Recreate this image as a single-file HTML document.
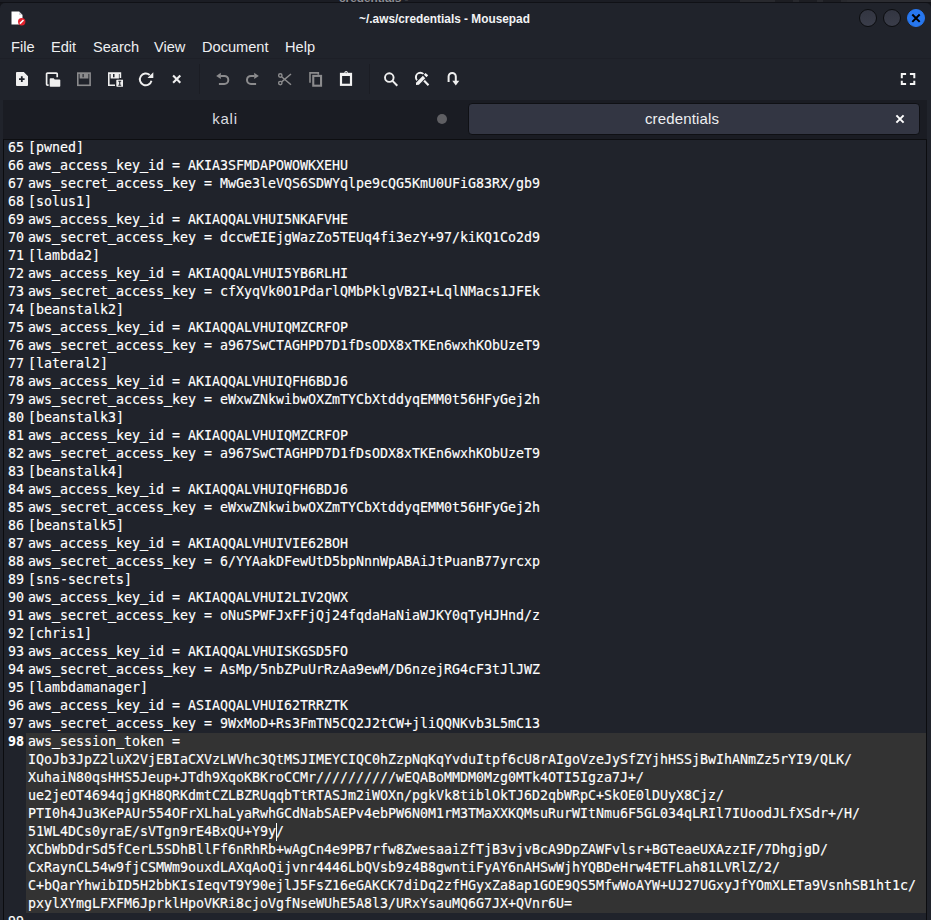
<!DOCTYPE html>
<html lang="en">
<head>
<meta charset="utf-8">
<title>~/.aws/credentials - Mousepad</title>
<style>
*{box-sizing:border-box;margin:0;padding:0}
html,body{width:931px;height:920px;overflow:hidden;background:#14151a}
body{position:relative;font-family:"Liberation Sans","DejaVu Sans",sans-serif;color:#e8e9ec}
#back{position:absolute;left:0;top:0;width:931px;height:3px;background:#1b1d24;border-bottom:1px solid #101116}
#back i{position:absolute;top:0;height:2px;background:#1d1e23}
#back{overflow:hidden}
#ghost{position:absolute;left:339px;top:-8px;font-size:11.8px;line-height:12px;font-weight:bold;color:#8e8e94;white-space:nowrap}
#win{position:absolute;left:0;top:3px;width:931px;height:917px;background:#20232b;border-radius:5px 5px 0 0;overflow:hidden}
#lborder{position:absolute;left:3px;top:136px;width:1px;height:781px;background:#0b0c0f}
/* title bar */
#title{position:absolute;left:0;top:0;width:931px;height:30px}
#title .cap{position:absolute;left:0;width:889px;top:9px;text-align:center;font-size:11.85px;font-weight:bold;color:#f2f3f5;letter-spacing:0}
.wb{position:absolute;top:6px;width:18px;height:18px;border-radius:50%;background:linear-gradient(#323541,#3a3d4a);border:1px solid #0c0d10}
.wb.close{background:#2777ef;border-color:#2777ef}
/* menubar */
#menu{position:absolute;left:0;top:30px;width:931px;height:28px}
#menu span{position:absolute;top:6px;font-size:14.6px;color:#eeeff1;white-space:nowrap}
/* toolbar */
#tools{position:absolute;left:0;top:57px;width:931px;height:40px}
#tools svg{position:absolute;top:11px;width:16px;height:16px}
.sep{position:absolute;top:4px;width:1px;height:30px;background:#1b1d24}
#hsep{position:absolute;left:0;top:55px;width:931px;height:1px;background:#1d1f27}
/* tabs */
#tabs{position:absolute;left:0;top:97px;width:931px;height:40px}
#tabs .bg{position:absolute;left:3px;top:0;width:924px;height:40px;background:#1a1c23;border-bottom:1px solid #0d0e11}
#tabs .t1{position:absolute;left:0;width:450px;top:10px;text-align:center;font-size:15px;letter-spacing:.8px;color:#dcdde0}
#tabs .dot{position:absolute;left:437px;top:14px;width:10px;height:10px;border-radius:50%;background:#5f5f63}
#tabs .act{position:absolute;left:468px;top:3px;width:452px;height:32px;background:#333643;border:1px solid #0f1014;border-radius:4px}
#tabs .t2{position:absolute;left:468px;width:428px;top:10px;text-align:center;font-size:15px;letter-spacing:.15px;color:#eeeff1}
/* editor */
#ed{position:absolute;left:5px;top:137px;width:926px;height:780px;background:#20232b;overflow:hidden}
#hl{position:absolute;left:21px;top:593px;width:900px;height:180px;background:#333333}
#rline{position:absolute;left:921px;top:0;width:1px;height:780px;background:#0b0c0f}
pre{position:absolute;top:-1px;font-family:"DejaVu Sans Mono","Liberation Mono",monospace;font-size:13.30px;line-height:18px;letter-spacing:-0.0055px;color:#ffffff;white-space:pre;-webkit-text-stroke:0.15px #ffffff}
#nums{left:3px}
#code{left:23px}
#code i{font-style:normal;position:relative;top:-1px;-webkit-text-stroke:.45px #ffffff}
#caret{position:absolute;left:270.5px;top:683px;width:1.2px;height:18px;background:#ffffff}
b{font-weight:bold}
</style>
</head>
<body>
<div id="back"><span id="ghost">credentials -</span><i style="left:740px;width:191px;background:#28292e"></i><i style="left:775px;width:18px"></i><i style="left:799px;width:18px"></i><i style="left:823px;width:18px"></i><i style="left:847px;width:84px;background:#2b2c31"></i></div>
<div id="win">
  <div id="title">
    <svg style="position:absolute;left:11px;top:8px" width="15" height="15" viewBox="0 0 15 15"><path d="M0.5 0.5h7.5l3.5 3.5v9.5h-11z" fill="#ffffff"/><path d="M8 0.5l3.5 3.5h-3.5z" fill="#d4d4d8"/><circle cx="10.7" cy="10.8" r="3.7" fill="#e0202c"/><path d="M8.9 12.6l3.6-3.6" stroke="#ffffff" stroke-width="1.5"/></svg>
    <div class="cap">~/.aws/credentials - Mousepad</div>
    <div class="wb" style="left:859px"></div>
    <div class="wb" style="left:883px"></div>
    <div class="wb close" style="left:907px"><svg width="16" height="16" viewBox="0 0 16 16" style="position:absolute;left:0;top:0"><path d="M4.300 4.500l7.400 7.400M11.700 4.500l-7.400 7.400" stroke="#000000" stroke-width="2" fill="none"/></svg></div>
  </div>
  <div id="menu">
    <span style="left:11px">File</span>
    <span style="left:51px">Edit</span>
    <span style="left:93px">Search</span>
    <span style="left:154px">View</span>
    <span style="left:202px">Document</span>
    <span style="left:285px">Help</span>
  </div>
  <div id="hsep"></div>
  <div id="tools">
    <svg style="left:14px" viewBox="0 0 16 16"><path d="M2.9 1h6.9L14 5.2V14.1a.9.9 0 0 1-.9.9H2.9a.9.9 0 0 1-.9-.9V1.9A.9.9 0 0 1 2.900 1z" fill="#efefef"/><path d="M7.8 5.3v5.6M5 8.100h5.600" stroke="#20232b" stroke-width="1.800" fill="none"/></svg>
    <svg style="left:45px" viewBox="0 0 16 16"><path d="M3.600 14.200H2.500a.9.9 0 0 1-.9-.9V3a.9.9 0 0 1 .9-.9h8.800a.9.9 0 0 1 .9.9V6.300" stroke="#efefef" stroke-width="1.700" fill="none"/><path d="M4.700 8.100a.8.8 0 0 1 .8-.8h3.200l1 1.100h4.800a.8.8 0 0 1 .8.800v5.700a.8.800 0 0 1-.8.800H5.500a.8.800 0 0 1-.8-.8z" fill="#efefef"/></svg>
    <svg style="left:76px" viewBox="0 0 16 16"><rect x="1.800" y="2.100" width="12.300" height="12.200" stroke="#8b8b8d" stroke-width="1.600" fill="none"/><path d="M3.600 2h8.800v5.600H3.600z" fill="#8b8b8d"/><path d="M6.400 3.100h1.500v3.200H6.400z" fill="#3a3c42"/></svg>
    <svg style="left:107px" viewBox="0 0 16 16"><path d="M8 14.200H1.800V2.100h11.600v5" stroke="#efefef" stroke-width="1.600" fill="none"/><path d="M3.600 2h8.300v5.400H3.600z" fill="#efefef"/><path d="M6 3h1.500v3.300H6z" fill="#20232b"/><rect x="9.300" y="8.700" width="6.900" height="7.100" rx=".7" fill="#efefef"/><path d="M11.300 10.200h2.900M11.300 14.300h2.900M12.750 10.200v4.100" stroke="#20232b" stroke-width="1.100" fill="none"/></svg>
    <svg style="left:138px" viewBox="0 0 16 16"><path d="M13.500 9.800A5.900 5.900 0 1 1 11.700 4" stroke="#efefef" stroke-width="1.900" fill="none"/><path d="M15.300 1.300v5.800H9.500z" fill="#efefef"/></svg>
    <svg style="left:169px" viewBox="0 0 16 16"><path d="M4.100 4.500l7.200 7.200M11.300 4.500l-7.200 7.200" stroke="#efefef" stroke-width="2.100" fill="none"/></svg>
    <svg style="left:214px" viewBox="0 0 16 16"><path d="M6.500 4.900h3.800a4 4 0 0 1 0 8H4.900" stroke="#8b8b8d" stroke-width="2" fill="none"/><path d="M2.200 4.900l4.600-3.100v6.200z" fill="#8b8b8d"/></svg>
    <svg style="left:245px" viewBox="0 0 16 16"><path d="M9.500 4.900H6a4 4 0 0 0 0 8h5.100" stroke="#8b8b8d" stroke-width="2" fill="none"/><path d="M13.800 4.900l-4.600-3.100v6.200z" fill="#8b8b8d"/></svg>
    <svg style="left:276px" viewBox="0 0 16 16"><circle cx="4.300" cy="4.500" r="1.700" stroke="#8b8b8d" stroke-width="1.400" fill="none"/><circle cx="4.300" cy="12.100" r="1.700" stroke="#8b8b8d" stroke-width="1.400" fill="none"/><path d="M5.600 5.800l9.400 8M5.600 10.800l9.400-7.800" stroke="#8b8b8d" stroke-width="1.500" fill="none"/></svg>
    <svg style="left:307px" viewBox="0 0 16 16"><path d="M3 11.700V1.900h8.300v1.800" stroke="#8b8b8d" stroke-width="1.600" fill="none"/><rect x="6.250" y="4.900" width="7.800" height="9.800" stroke="#8b8b8d" stroke-width="2.100" fill="none"/></svg>
    <svg style="left:338px" viewBox="0 0 16 16"><rect x="3" y="2.900" width="10" height="10.900" stroke="#f2f2f2" stroke-width="2.200" fill="none"/><path d="M4 2h8v3H4z" fill="#f2f2f2"/><circle cx="8.100" cy="1.700" r="1.700" fill="#f2f2f2"/><circle cx="8.100" cy="1.600" r=".6" fill="#20232b"/></svg>
    <svg style="left:383px" viewBox="0 0 16 16"><circle cx="6.300" cy="6.600" r="4.300" stroke="#efefef" stroke-width="1.900" fill="none"/><path d="M9.500 9.900l4.800 4.800" stroke="#efefef" stroke-width="2" fill="none"/></svg>
    <svg style="left:414px" viewBox="0 0 16 16"><circle cx="6.300" cy="6.200" r="4.400" stroke="#f2f2f2" stroke-width="2" fill="none"/><path d="M10 9.600l4.500 4.700" stroke="#f2f2f2" stroke-width="2.100" fill="none"/><path d="M8.900 3.600l3.400 3.600-7 7.700H1V11.300zM11.500.800l3.800 3.500-2.800 3.100-3.800-3.600z" fill="#20232b"/><path d="M8.900 4.700l2.300 2.500-6.300 6.600-2.900.1V11.700z" fill="#f2f2f2"/><path d="M11.500 1.900l2.700 2.450-1.700 1.950L9.900 3.700z" fill="#f2f2f2"/></svg>
    <svg style="left:445px" viewBox="0 0 16 16"><path d="M3.600 11V5.600a3.600 3.600 0 0 1 7.200 0v5" stroke="#efefef" stroke-width="2" fill="none"/><path d="M7.300 9.800h7l-3.500 4.600z" fill="#efefef"/></svg>
    <svg style="left:900px" viewBox="0 0 16 16"><path d="M1.800 7.300V3H6.100M9.900 3h4.400v4.300M14.300 9.700V13H9.900M6.100 13H1.800V9.700" stroke="#f4f4f4" stroke-width="2" fill="none"/></svg>
    <div class="sep" style="left:199px"></div>
    <div class="sep" style="left:369px"></div>
  </div>
  <div id="tabs">
    <div class="bg"></div>
    <div class="t1">kali</div>
    <div class="dot"></div>
    <div class="act"></div>
    <div class="t2">credentials</div>
    <svg style="position:absolute;left:894px;top:13px" width="12" height="12" viewBox="0 0 12 12"><path d="M2.4 2.4l7.2 7.2M9.6 2.4l-7.2 7.2" stroke="#ffffff" stroke-width="2" fill="none"/></svg>
  </div>
  <div id="lborder"></div>
  <div id="ed">
    <div id="hl"></div>
    <div id="rline"></div>
<pre id="nums">65
66
67
68
69
70
71
72
73
74
75
76
77
78
79
80
81
82
83
84
85
86
87
88
89
90
91
92
93
94
95
96
97
<b>98</b>









99</pre>
<pre id="code">[pwned]
aws<i>_</i>access<i>_</i>key<i>_</i>id = AKIA3SFMDAPOWOWKXEHU
aws<i>_</i>secret<i>_</i>access<i>_</i>key = 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
[solus1]
aws<i>_</i>access<i>_</i>key<i>_</i>id = AKIAQQALVHUI5NKAFVHE
aws<i>_</i>secret<i>_</i>access<i>_</i>key = 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
[lambda2]
aws<i>_</i>access<i>_</i>key<i>_</i>id = AKIAQQALVHUI5YB6RLHI
aws<i>_</i>secret<i>_</i>access<i>_</i>key = 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
[beanstalk2]
aws<i>_</i>access<i>_</i>key<i>_</i>id = AKIAQQALVHUIQMZCRFOP
aws<i>_</i>secret<i>_</i>access<i>_</i>key = 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
[lateral2]
aws<i>_</i>access<i>_</i>key<i>_</i>id = AKIAQQALVHUIQFH6BDJ6
aws<i>_</i>secret<i>_</i>access<i>_</i>key = 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
[beanstalk3]
aws<i>_</i>access<i>_</i>key<i>_</i>id = AKIAQQALVHUIQMZCRFOP
aws<i>_</i>secret<i>_</i>access<i>_</i>key = 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
[beanstalk4]
aws<i>_</i>access<i>_</i>key<i>_</i>id = AKIAQQALVHUIQFH6BDJ6
aws<i>_</i>secret<i>_</i>access<i>_</i>key = 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
[beanstalk5]
aws<i>_</i>access<i>_</i>key<i>_</i>id = AKIAQQALVHUIVIE62BOH
aws<i>_</i>secret<i>_</i>access<i>_</i>key = 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
[sns-secrets]
aws<i>_</i>access<i>_</i>key<i>_</i>id = AKIAQQALVHUI2LIV2QWX
aws<i>_</i>secret<i>_</i>access<i>_</i>key = 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
[chris1]
aws<i>_</i>access<i>_</i>key<i>_</i>id = AKIAQQALVHUISKGSD5FO
aws<i>_</i>secret<i>_</i>access<i>_</i>key = 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
[lambdamanager]
aws<i>_</i>access<i>_</i>key<i>_</i>id = ASIAQQALVHUI62TRRZTK
aws<i>_</i>secret<i>_</i>access<i>_</i>key = 9WxMoD+Rs3FmTN5CQ2J2tCW+jliQQNKvb3L5mC13
aws<i>_</i>session<i>_</i>token = 
IQoJb3JpZ2luX2VjEBIaCXVzLWVhc3QtMSJIMEYCIQC0hZzpNqKqYvduItpf6cU8rAIgoVzeJySfZYjhHSSjBwIhANmZz5rYI9/QLK/
XuhaiN80qsHHS5Jeup+JTdh9XqoKBKroCCMr//////////wEQABoMMDM0Mzg0MTk4OTI5Igza7J+/
ue2jeOT4694qjgKH8QRKdmtCZLBZRUqqbTtRTASJm2iWOXn/pgkVk8tiblOkTJ6D2qbWRpC+SkOE0lDUyX8Cjz/
PTI0h4Ju3KePAUr554OFrXLhaLyaRwhGCdNabSAEPv4ebPW6N0M1rM3TMaXXKQMsuRurWItNmu6F5GL034qLRIl7IUoodJLfXSdr+/H/
51WL4DCs0yraE/sVTgn9rE4BxQU+Y9y/
XCbWbDdrSd5fCerL5SDhBllFf6nRhRb+wAgCn4e9PB7rfw8ZwesaaiZfTjB3vjvBcA9DpZAWFvlsr+BGTeaeUXAzzIF/7DhgjgD/
CxRaynCL54w9fjCSMWm9ouxdLAXqAoQijvnr4446LbQVsb9z4B8gwntiFyAY6nAHSwWjhYQBDeHrw4ETFLah81LVRlZ/2/
C+bQarYhwibID5H2bbKIsIeqvT9Y90ejlJ5FsZ16eGAKCK7diDq2zfHGyxZa8ap1GOE9QS5MfwWoAYW+UJ27UGxyJfYOmXLETa9VsnhSB1ht1c/
pxylXYmgLFXFM6JprklHpoVKRi8cjoVgfNseWUhE5A8l3/URxYsauMQ6G7JX+QVnr6U=
</pre>
    <div id="caret"></div>
  </div>
</div>
</body>
</html>
